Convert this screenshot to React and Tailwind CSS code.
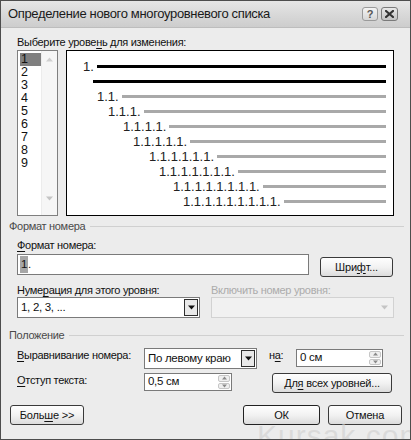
import React from 'react';

// Access-key underline used throughout the dialog labels
const U = ({ children }) => <span className="underline underline-offset-[2px]">{children}</span>;

const TriDown = ({ color = '#111', size = 7 }) => (
  <svg width={size} height={Math.ceil(size / 2) + 1} viewBox="0 0 7 4">
    <path d="M0 0h7L3.5 4z" fill={color} />
  </svg>
);

const TriUp = ({ color = '#111', size = 7 }) => (
  <svg width={size} height={Math.ceil(size / 2) + 1} viewBox="0 0 7 4">
    <path d="M0 4h7L3.5 0z" fill={color} />
  </svg>
);

const XpButton = ({ children, className = '' }) => (
  <div
    className={`flex items-center justify-center rounded-[3px] border border-[#3a3a3a] bg-linear-to-b from-[#fefefe] via-[#f2f2f2] to-[#dcdcdc] text-[11px] tracking-[-0.2px] text-[#111] ${className}`}
  >
    {children}
  </div>
);

const Combo = ({ value, className = '', disabled }) => (
  <div
    className={`flex border ${disabled ? 'border-[#d2d2d2] bg-[#f1f1f1]' : 'border-[#7a7a7a] bg-white'} ${className}`}
  >
    <div className="flex-1 flex items-center pl-[3px] text-[11.5px] text-[#111]">{value}</div>
    {disabled ? (
      <div className="w-[15px] m-[1px] flex items-center justify-center">
        <TriDown color="#c4c4c4" />
      </div>
    ) : (
      <div className="w-[14px] m-[1px] flex items-center justify-center border border-[#2e2e2e] bg-[#e9e9e9]">
        <TriDown />
      </div>
    )}
  </div>
);

const Spinner = ({ value, className = '' }) => (
  <div className={`flex h-[18px] border border-[#7a7a7a] bg-white ${className}`}>
    <div className="flex-1 flex items-center pl-[3px] text-[11.5px] text-[#111]">{value}</div>
    <div className="w-[14px] flex flex-col p-[1px] gap-[1px]">
      <div className="flex-1 flex items-center justify-center rounded-[2px] border border-[#c6c6c6] bg-[#efefef]">
        <TriUp color="#8a8a8a" size={5} />
      </div>
      <div className="flex-1 flex items-center justify-center rounded-[2px] border border-[#c6c6c6] bg-[#efefef]">
        <TriDown color="#8a8a8a" size={5} />
      </div>
    </div>
  </div>
);

const GroupHeader = ({ children, className = '' }) => (
  <div className={`-ml-[8px] -mr-[10px] flex items-center gap-[5px] leading-[14px] text-[#4a4a4a] ${className}`}>
    <span>{children}</span>
    <div className="flex-1 h-px bg-[#d0d0d0]" />
  </div>
);

const levels = [
  { text: '1.', indent: 'ml-[16px]', line: 'bg-black' },
  { text: '', indent: 'ml-[26px]', line: 'bg-black' },
  { text: '1.1.', indent: 'ml-[30px]', line: 'bg-[#a9a9a9]' },
  { text: '1.1.1.', indent: 'ml-[41px]', line: 'bg-[#a9a9a9]' },
  { text: '1.1.1.1.', indent: 'ml-[56px]', line: 'bg-[#a9a9a9]' },
  { text: '1.1.1.1.1.', indent: 'ml-[66px]', line: 'bg-[#a9a9a9]' },
  { text: '1.1.1.1.1.1.', indent: 'ml-[82px]', line: 'bg-[#a9a9a9]' },
  { text: '1.1.1.1.1.1.1.', indent: 'ml-[92px]', line: 'bg-[#a9a9a9]' },
  { text: '1.1.1.1.1.1.1.1.', indent: 'ml-[106px]', line: 'bg-[#a9a9a9]' },
  { text: '1.1.1.1.1.1.1.1.1.', indent: 'ml-[116px]', line: 'bg-[#a9a9a9]' },
];

export default function App() {
  return (
    <div className="relative w-[411px] h-[440px] overflow-hidden border border-[#4d4d4d] bg-[#ececec] font-['Liberation_Sans',Arial,sans-serif] text-[#111]">
      {/* Title bar */}
      <div className="h-[27px] flex items-center pl-[7px] pr-[12px] bg-linear-to-b from-[#e6e6e6] via-[#d9d9d9] to-[#cdcdcd] border-b border-[#bdbdbd]">
        <span className="flex-1 text-[13px] tracking-[-0.35px] text-[#1a1a1a]">Определение нового многоуровневого списка</span>
        <div className="flex gap-[3px]">
          <div className="w-[16px] h-[14px] rounded-[3px] border border-[#9a9a9a] bg-linear-to-b from-[#f4f4f4] to-[#d6d6d6] flex items-center justify-center text-[11px] font-bold leading-none text-[#555]">
            ?
          </div>
          <div className="w-[17px] h-[14px] rounded-[3px] border border-[#7a7a7a] bg-linear-to-b from-[#e8e8e8] to-[#c2c2c2] flex items-center justify-center">
            <svg width="9" height="8" viewBox="0 0 9 8">
              <path d="M1 1l7 6M8 1L1 7" stroke="#333" strokeWidth="2.2" strokeLinecap="square" />
            </svg>
          </div>
        </div>
      </div>

      {/* Dialog body */}
      <div className="pl-[16px] pr-[16px] pt-[7px] text-[11px] tracking-[-0.3px]">
        <div className="leading-[14px]">
          Выберите урове<U>н</U>ь для изменения:
        </div>

        <div className="mt-[1px] flex gap-[8px] h-[166px] tracking-normal">
          {/* Level list */}
          <div className="w-[41px] flex border border-[#7f7f7f] bg-white">
            <div className="w-[23px] pt-[2px] pl-[2px] text-[12.5px] leading-[13px]">
              {[1, 2, 3, 4, 5, 6, 7, 8, 9].map((n) => (
                <div key={n} className={`h-[13px] pl-[1px] ${n === 1 ? 'bg-[#7f7f7f]' : ''}`}>
                  {n}
                </div>
              ))}
            </div>
            <div className="flex-1 flex flex-col justify-between bg-[#f6f6f6] border-l border-[#ececec] py-[6px]">
              <div className="flex justify-center">
                <TriUp color="#d0d0d0" size={7} />
              </div>
              <div className="flex justify-center pb-[8px]">
                <TriDown color="#c4c4c4" size={7} />
              </div>
            </div>
          </div>

          {/* Numbering preview */}
          <div className="flex-1 border border-black bg-white pt-[8px] pr-[7px]">
            {levels.map((lv, i) => (
              <div key={i} className={`h-[15px] flex items-center gap-[3px] ${lv.indent}`}>
                {lv.text && <span className="text-[13px] leading-[15px] text-[#222]">{lv.text}</span>}
                <div className={`flex-1 h-[3px] ${lv.line}`} />
              </div>
            ))}
          </div>
        </div>

        <GroupHeader className="mt-[3px]">Формат номера</GroupHeader>

        <div className="mt-[5px] leading-[14px]">
          <U>Ф</U>ормат номера:
        </div>
        <div className="mt-[2px] flex items-start">
          <div className="w-[292px] h-[21px] flex items-center border border-[#7a7a7a] bg-white pl-[2px] text-[11.5px]">
            <span className="bg-[#a6a6a6] px-[1px]">1</span>
            <span>.</span>
          </div>
          <XpButton className="ml-[11px] mt-[3px] w-[73px] h-[20px]">
            Шри<U>ф</U>т...
          </XpButton>
        </div>

        <div className="mt-[6px] grid grid-cols-2 gap-x-[11px]">
          <div className="leading-[14px]">
            Нуме<U>р</U>ация для этого уровня:
          </div>
          <div className="leading-[14px] text-[#ababab]">Включить номер уровня:</div>
          <Combo value="1, 2, 3, ..." className="h-[21px]" />
          <Combo disabled className="h-[21px]" />
        </div>

        <GroupHeader className="mt-[10px]">Положение</GroupHeader>

        <div className="mt-[6px] flex items-start">
          <div className="w-[127px] leading-[14px]">
            <U>В</U>ыравнивание номера:
          </div>
          <Combo value="По левому краю" className="w-[113px] h-[21px]" />
          <div className="ml-[12px] w-[27px] leading-[14px]">
            н<U>а</U>:
          </div>
          <Spinner value="0 см" className="mt-[1px] w-[87px]" />
        </div>

        <div className="mt-[4px] flex items-start">
          <div className="w-[127px] leading-[14px]">
            <U>О</U>тступ текста:
          </div>
          <Spinner value="0,5 см" className="w-[88px]" />
          <XpButton className="ml-[40px] w-[120px] h-[20px]">
            Дл<U>я</U>&nbsp;всех уровней...
          </XpButton>
        </div>

        <div className="mt-[12px] -ml-[7px] -mr-[8px] flex">
          <XpButton className="w-[74px] h-[20px]">
            Боль<U>ш</U>е &gt;&gt;
          </XpButton>
          <div className="flex-1" />
          <XpButton className="w-[77px] h-[20px] border-[#222]">ОК</XpButton>
          <XpButton className="ml-[8px] w-[74px] h-[20px]">Отмена</XpButton>
        </div>
      </div>

      {/* Site watermark across the lower edge */}
      <div className="pointer-events-none absolute left-[256px] top-[420px] text-[30px] leading-none tracking-[1px] text-[#cfcfcf]/60">
        Kursak.com
      </div>
    </div>
  );
}
